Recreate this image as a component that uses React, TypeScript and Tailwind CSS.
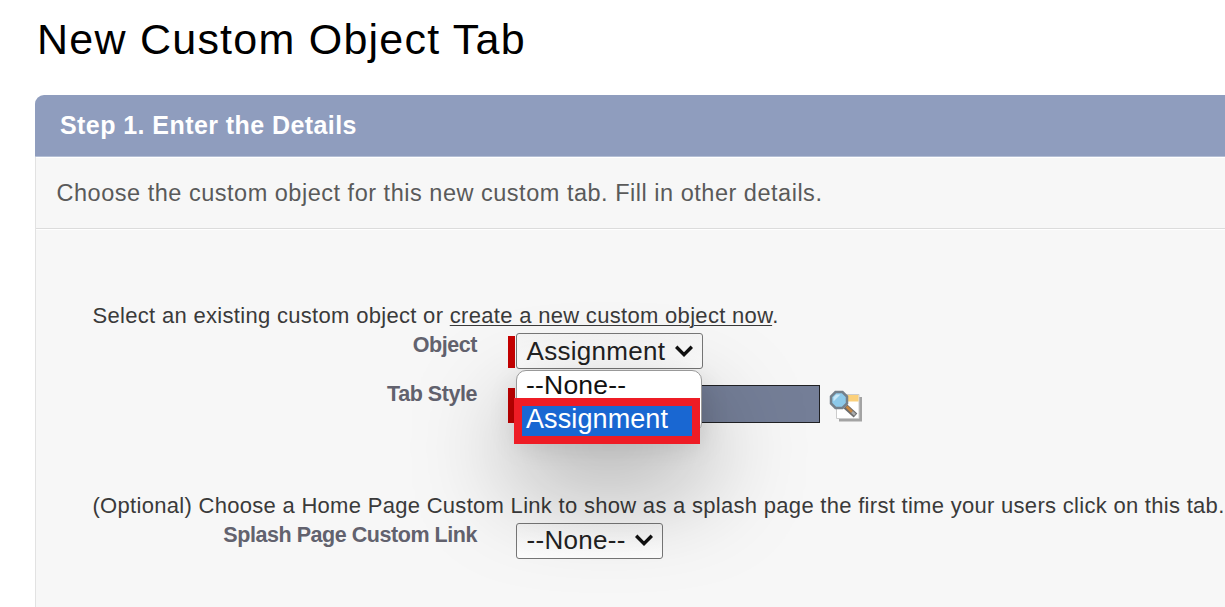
import type { ReactNode } from "react";

function Chevron() {
  return (
    <svg className="h-[12px] w-[18px] shrink-0" viewBox="0 0 18 12" fill="none">
      <path d="M1.200 1.800 9 9.600l7.800-7.800" stroke="#111" strokeWidth="3.400" />
    </svg>
  );
}

function SelectBox({ value, className }: { value: string; className: string }) {
  return (
    <div
      className={`flex h-[36px] items-center justify-between rounded-[3px] border-[1.5px] border-[#777] bg-linear-to-b from-[#f5f5f5] to-white pr-[9px] pl-[9.5px] text-[26px] text-[#222] ${className}`}
    >
      <span className="whitespace-nowrap">{value}</span>
      <Chevron />
    </div>
  );
}

function Label({ children }: { children: ReactNode }) {
  return (
    <div className="w-[441px] shrink-0 text-right text-[21.5px] leading-[24px] font-bold tracking-[-0.45px] text-[#62626e]">
      {children}
    </div>
  );
}

function LookupIcon() {
  return (
    <svg className="h-[34px] w-[34px]" viewBox="0 0 34 34" fill="none">
      <path d="M10 7h23v24.500H10z" fill="#a3a3a3" />
      <path d="M7.500 4.500h22.500v24H7.500z" fill="#fff" stroke="#ccc" />
      <path d="M18 5h11.500v6.500H18z" fill="#fbd07a" />
      <path d="m16.500 16.500 10 9" stroke="#6b6b6b" strokeWidth="5.500" />
      <path d="m17.500 16.500 5.500 5.500" stroke="#c68642" strokeWidth="2.600" />
      <path d="m23 22 3 2.800" stroke="#aaa" strokeWidth="2.600" />
      <path d="M6.500 2h7l4.500 4.500v7l-4.500 4.500h-7L2 13.500v-7z" fill="#8cc9ea" stroke="#74808b" strokeWidth="2.500" />
      <path d="M7.200 4.500h4.300l-7 7V7.200z" fill="#c8e8f8" />
    </svg>
  );
}

export default function App() {
  return (
    <main className="h-[607px] w-[1225px] overflow-hidden bg-white font-['Liberation_Sans',Arial,sans-serif]">
      <h1 className="h-[95px] pt-[14px] pl-[37px] text-[43px] leading-[50px] tracking-[1.24px] text-black">
        New Custom Object Tab
      </h1>
      <section className="ml-[35px] h-[512px] rounded-tl-[9px] bg-[#f7f7f7]">
        <header className="h-[62px] rounded-tl-[9px] border-b border-[#b4bfd5] bg-[#8f9dbe] pl-[25px] text-[25px] leading-[61px] font-bold tracking-[0.43px] text-white">
          Step 1. Enter the Details
        </header>
        <div className="h-[450px] border-l border-[#e2e2e2]">
          <p className="h-[72px] border-t border-b border-t-white border-b-[#dcdcdc] pl-[20.5px] text-[23.5px] leading-[70px] tracking-[0.515px] text-[#5a5a5a]">
            Choose the custom object for this new custom tab. Fill in other details.
          </p>
          <div className="border-t border-white pt-[73px]">
            <p className="h-[30px] pl-[56.5px] text-[22px] leading-[26px] tracking-[0.31px] whitespace-nowrap text-[#3a3a3a]">
              Select an existing custom object or{" "}
              <span className="underline decoration-1 underline-offset-[2px]">create a new custom object now</span>.
            </p>
            <div className="flex h-[52px]">
              <Label>Object</Label>
              <div className="mt-[3px] ml-[31px] h-[32px] w-[6.5px] bg-[#c60000]" />
              <div className="relative ml-[1.5px] h-[36px]">
                <SelectBox value="Assignment" className="w-[187px] leading-[34px] tracking-[0.3px]" />
                <div className="absolute top-[37px] left-0 z-10 h-[63px] w-[186px] rounded-[10px] border border-[#999] bg-white text-[27px] text-[#111] shadow-[0_46px_100px_4px_rgba(0,0,0,0.36),0_12px_28px_0_rgba(0,0,0,0.13)]">
                  <div className="h-[27px] pl-[9px] text-[26.500px] leading-[29px] tracking-[0.2px] whitespace-nowrap">
                    --None--
                  </div>
                  <div className="-ml-[3px] h-[46px] w-[186px] border-[8px] border-[#ee1c25] bg-[#1967d2] pl-[4px] leading-[26px] tracking-[0.1px] text-white">
                    Assignment
                  </div>
                </div>
              </div>
            </div>
            <div className="flex h-[108px]">
              <Label>
                <span className="block h-[20px] leading-[18px]">Tab Style</span>
              </Label>
              <div className="mt-[3px] ml-[31px] h-[35px] w-[6.5px] bg-[#c60000]" />
              <div className="ml-[1.5px] h-[38px] w-[304px] border-[1.5px] border-[#202124] bg-[#747e97]" />
              <div className="mt-[5px] ml-[9px]">
                <LookupIcon />
              </div>
            </div>
            <p className="h-[30px] pl-[56.5px] text-[22px] leading-[26px] tracking-[0.295px] whitespace-nowrap text-[#3a3a3a]">
              (Optional) Choose a Home Page Custom Link to show as a splash page the first time your users click on this tab.
            </p>
            <div className="flex">
              <Label>Splash Page Custom Link</Label>
              <div className="ml-[39px]">
                <SelectBox value="--None--" className="w-[147px] pb-[2px] leading-[32px] tracking-[0.3px]" />
              </div>
            </div>
          </div>
        </div>
      </section>
    </main>
  );
}
